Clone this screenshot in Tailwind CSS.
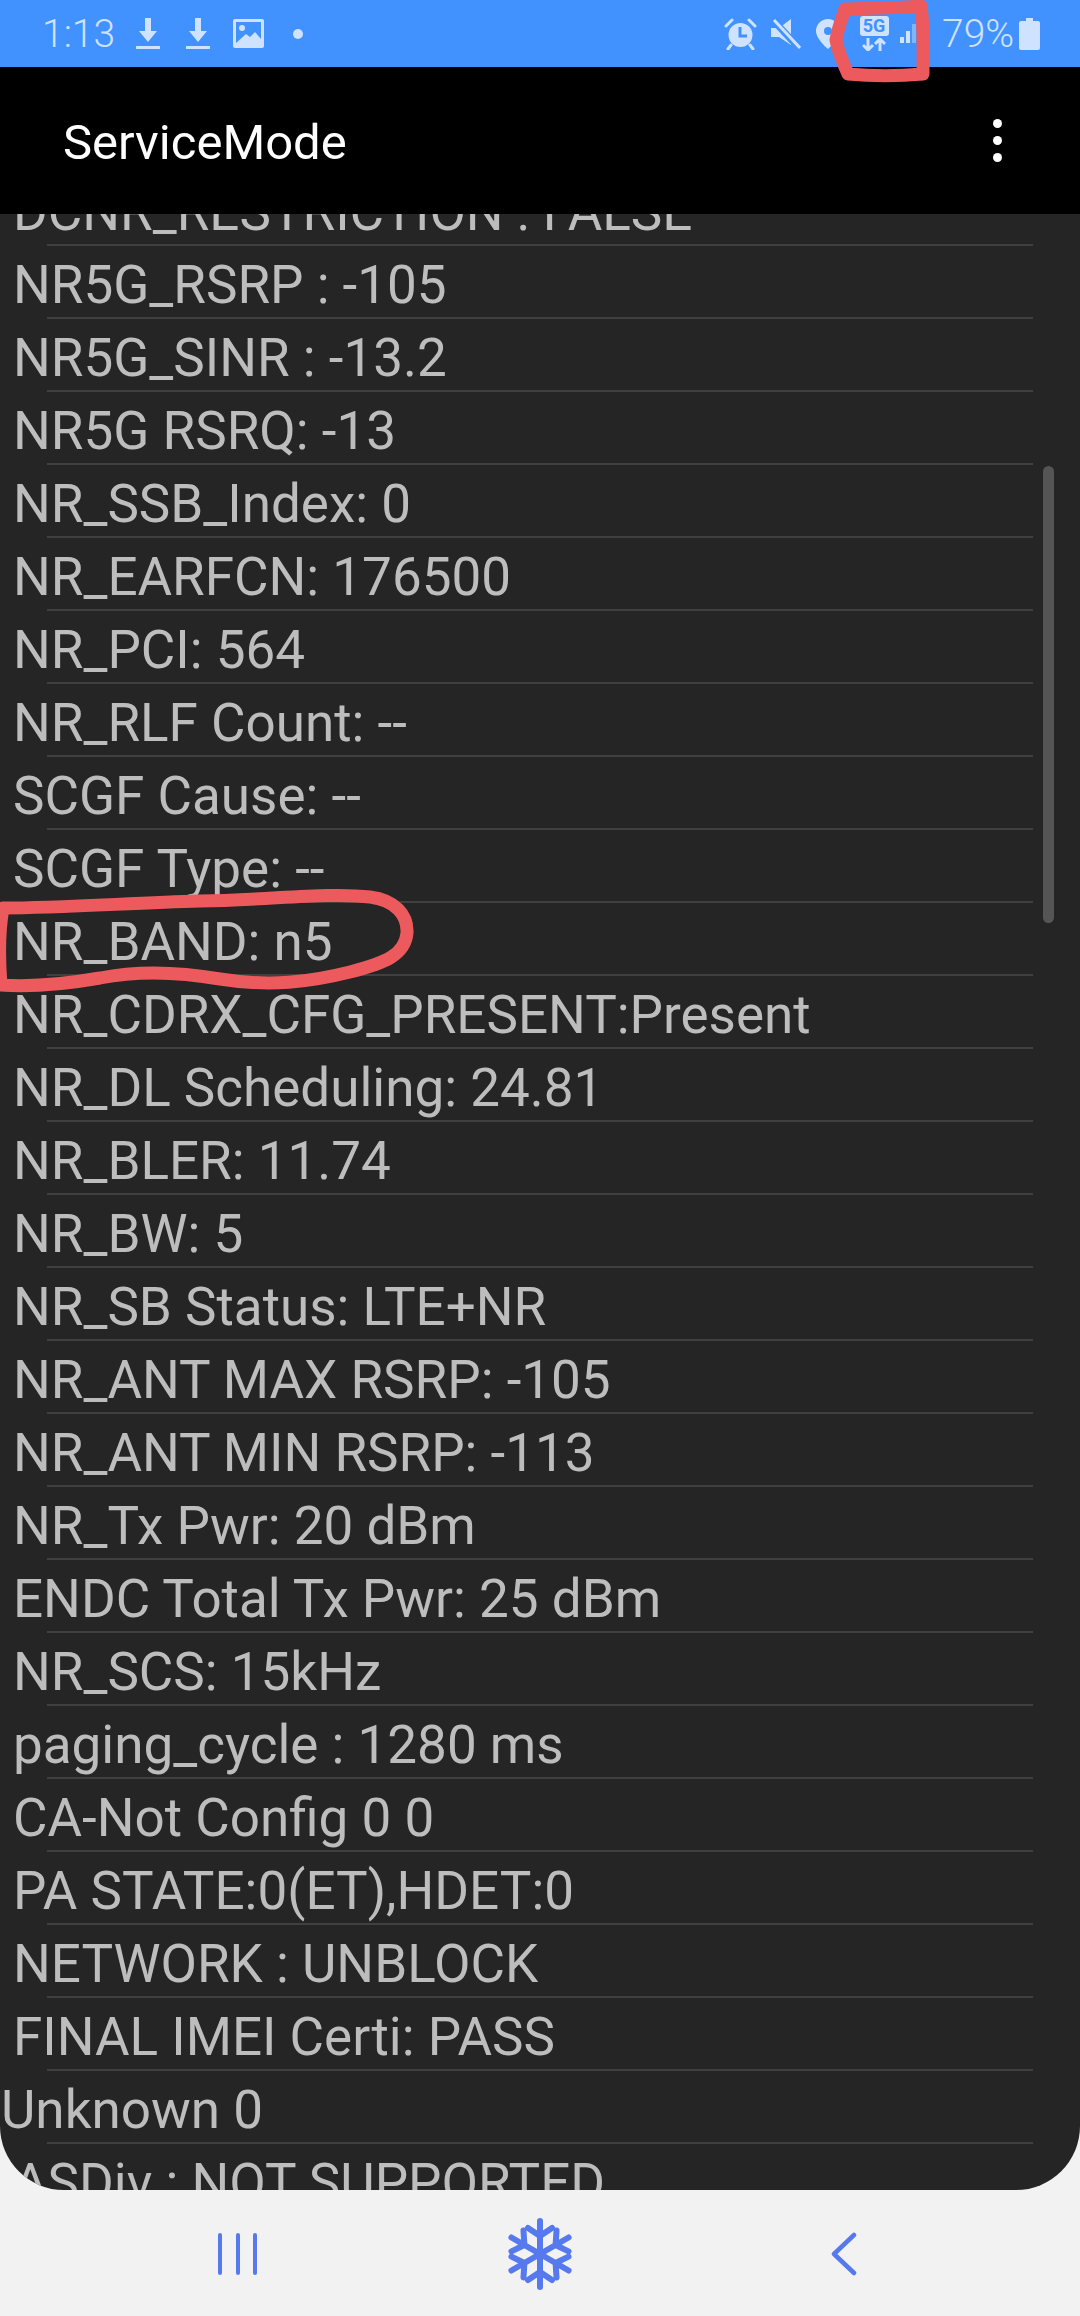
<!DOCTYPE html>
<html lang="en">
<head>
  <meta charset="UTF-8" />
  <title>ServiceMode</title>
  <script src="https://cdn.jsdelivr.net/npm/@tailwindcss/browser@4"></script>
</head>
<body class="bg-[#f2f2f2] font-['Roboto',sans-serif]">
  <div class="relative w-[1080px] h-[2316px] overflow-hidden flex flex-col">

    <!-- Status bar -->
    <div class="h-[67px] shrink-0 bg-[#4191ff] text-[#cfe2ff] flex items-center justify-between pl-[42px] pr-[40px]">
      <div class="flex items-center">
        <span class="text-[39px] font-light leading-none w-[94px] pt-[2px]">1:13</span>
        <svg class="w-[24px] h-[32px] mr-[26px]" viewBox="0 0 24 32" fill="currentColor"><path d="M9 0h6v13h6L12 24 3 13h6zM0 28h24v3H0z"/></svg>
        <svg class="w-[24px] h-[32px] mr-[23px]" viewBox="0 0 24 32" fill="currentColor"><path d="M9 0h6v13h6L12 24 3 13h6zM0 28h24v3H0z"/></svg>
        <svg class="w-[31px] h-[29px] mr-[29px]" viewBox="0 0 31 29"><rect width="31" height="29" rx="2" fill="currentColor"/><path d="M3 3h25v17l-6-7-5 5-4-3-10 9z" fill="#4191ff"/><circle cx="9" cy="9" r="3" fill="currentColor"/></svg>
        <span class="w-[10px] h-[10px] rounded-full bg-[#cfe2ff]"></span>
      </div>
      <div class="flex items-center">
        <!-- alarm -->
        <svg class="w-[33px] h-[32px] mr-[14px]" viewBox="0 0 33 32"><circle cx="16.5" cy="17" r="12" fill="currentColor"/><path d="M2 8l6-6M31 8l-6-6M7 27l-3 4M26 27l3 4" stroke="currentColor" stroke-width="3" stroke-linecap="round"/><path d="M16 9v9h7" fill="none" stroke="#4191ff" stroke-width="3"/></svg>
        <!-- mute -->
        <svg class="w-[30px] h-[32px] mr-[15px]" viewBox="0 0 30 32"><path d="M0 10h8L20 1v26L8 19H0z" fill="currentColor"/><path d="M2 2l26 28" stroke="#4191ff" stroke-width="7"/><path d="M3 2l26 28" stroke="currentColor" stroke-width="3"/></svg>
        <!-- location, partly under the red mark -->
        <svg class="w-[24px] h-[30px] mr-[19px]" viewBox="0 0 24 30"><path fill-rule="evenodd" d="M12 0a12 12 0 0 1 12 12c0 8-12 18-12 18S0 20 0 12A12 12 0 0 1 12 0zm0 8a4 4 0 1 0 0 8 4 4 0 0 0 0-8z" fill="currentColor"/></svg>
        <!-- 5G + arrows -->
        <div class="flex flex-col items-center w-[30px] mr-[11px]">
          <span class="w-[29px] h-[20px] rounded-[3px] bg-[#cfe2ff] text-[#4191ff] text-[18px] leading-[20px] font-bold text-center">5G</span>
          <svg class="w-[24px] h-[13px] mt-[2px]" viewBox="0 0 24 13" fill="none" stroke="currentColor" stroke-width="3"><path d="M6 0v12M1 7l5 5 5-5M18 13V1M13 6l5-5 5 5"/></svg>
        </div>
        <svg class="w-[16px] h-[19px] mr-[26px] self-end mb-[11px]" viewBox="0 0 16 19" fill="currentColor"><rect y="13" width="4" height="6"/><rect x="6" y="7" width="4" height="12"/><rect x="12" width="4" height="19" opacity=".45"/></svg>
        <span class="text-[39px] font-light leading-none w-[77px] pt-[2px]">79%</span>
        <svg class="w-[21px] h-[32px]" viewBox="0 0 21 32" fill="currentColor"><path d="M7 0h7v3h5a2 2 0 0 1 2 2v25a2 2 0 0 1-2 2H2a2 2 0 0 1-2-2V5a2 2 0 0 1 2-2h5z"/></svg>
      </div>
    </div>

    <!-- App bar -->
    <div class="h-[147px] shrink-0 bg-black text-white flex items-center justify-between pl-[63px] pr-[78px]">
      <span class="text-[49px] leading-none pt-[3px]">ServiceMode</span>
      <div class="flex flex-col gap-[8px]">
        <span class="w-[9px] h-[9px] rounded-full bg-white"></span>
        <span class="w-[9px] h-[9px] rounded-full bg-white"></span>
        <span class="w-[9px] h-[9px] rounded-full bg-white"></span>
      </div>
    </div>

    <!-- Info list -->
    <div class="relative h-[1976px] shrink-0 bg-[#252525] rounded-b-[64px] overflow-hidden">
      <div id="rows" class="-mt-[41px] text-[#bdbdbd] text-[53px] leading-none"></div>
      <div class="absolute left-[1043px] top-[252px] w-[11px] h-[457px] rounded-full bg-[#555555]"></div>
    </div>

    <!-- Nav bar -->
    <div class="flex-1 flex items-center text-[#5679ee]">
      <svg class="absolute left-[216px] top-[2232px] w-[44px] h-[44px]" viewBox="0 0 44 44" stroke="currentColor" stroke-width="4" stroke-linecap="round"><path d="M4 3v38M22 3v38M39 3v38"/></svg>
      <svg class="absolute left-[505px] top-[2215px] w-[70px] h-[78px]" viewBox="-35 -39 70 78" fill="none" stroke="currentColor" stroke-width="6" stroke-linecap="round" stroke-linejoin="round">
        <path d="M0 0V-33M-12-26L0-18 12-26"/>
        <path transform="rotate(60)" d="M0 0V-33M-12-26L0-18 12-26"/>
        <path transform="rotate(120)" d="M0 0V-33M-12-26L0-18 12-26"/>
        <path transform="rotate(180)" d="M0 0V-33M-12-26L0-18 12-26"/>
        <path transform="rotate(240)" d="M0 0V-33M-12-26L0-18 12-26"/>
        <path transform="rotate(300)" d="M0 0V-33M-12-26L0-18 12-26"/>
      </svg>
      <svg class="absolute left-[830px] top-[2232px] w-[28px] h-[44px]" viewBox="0 0 28 44" fill="none" stroke="currentColor" stroke-width="4.5" stroke-linecap="round" stroke-linejoin="round"><path d="M24 3L4 22l20 19" /></svg>
    </div>

    <!-- Red hand-drawn marks -->
    <svg class="absolute inset-0 w-[1080px] h-[2316px] pointer-events-none" viewBox="0 0 1080 2316" fill="none" stroke="#ec5a5e" stroke-linecap="round" stroke-linejoin="round">
      <path stroke-width="13" d="M845 9C870 8 900 8 921 6C924 25 923 55 923 74C900 76 870 76 848 74C843 62 838 52 836 40C838 28 842 18 845 9Z"/>
      <path stroke-width="13" d="M1 985C-1 960 -1 930 3 908C60 908 130 903 200 901C270 900 330 892 370 897C395 900 408 915 407 933C405 955 385 963 350 972C310 982 270 987 220 979C180 972 140 970 100 978C60 985 30 987 1 985"/>
    </svg>
  </div>

  <script>
    const rows = [
      'DCNR_RESTRICTION : FALSE', 'NR5G_RSRP : -105', 'NR5G_SINR : -13.2', 'NR5G RSRQ: -13',
      'NR_SSB_Index: 0', 'NR_EARFCN: 176500', 'NR_PCI: 564', 'NR_RLF Count: --',
      'SCGF Cause: --', 'SCGF Type: --', 'NR_BAND: n5', 'NR_CDRX_CFG_PRESENT:Present',
      'NR_DL Scheduling: 24.81', 'NR_BLER: 11.74', 'NR_BW: 5', 'NR_SB Status: LTE+NR',
      'NR_ANT MAX RSRP: -105', 'NR_ANT MIN RSRP: -113', 'NR_Tx Pwr: 20 dBm',
      'ENDC Total Tx Pwr: 25 dBm', 'NR_SCS: 15kHz', 'paging_cycle : 1280 ms',
      'CA-Not Config 0 0', 'PA STATE:0(ET),HDET:0', 'NETWORK : UNBLOCK',
      'FINAL IMEI Certi: PASS', 'Unknown 0', 'ASDiv : NOT SUPPORTED'
    ];
    document.getElementById('rows').innerHTML = rows.map(text => `
      <div class="h-[73px] flex flex-col">
        <div class="flex-1 flex items-center whitespace-nowrap pt-[7px] ${text === 'Unknown 0' ? 'pl-[1px]' : 'pl-[13px]'}">${text}</div>
        <div class="h-[2px] ml-[47px] w-[986px] bg-[#404040]"></div>
      </div>`).join('');
  </script>
</body>
</html>
